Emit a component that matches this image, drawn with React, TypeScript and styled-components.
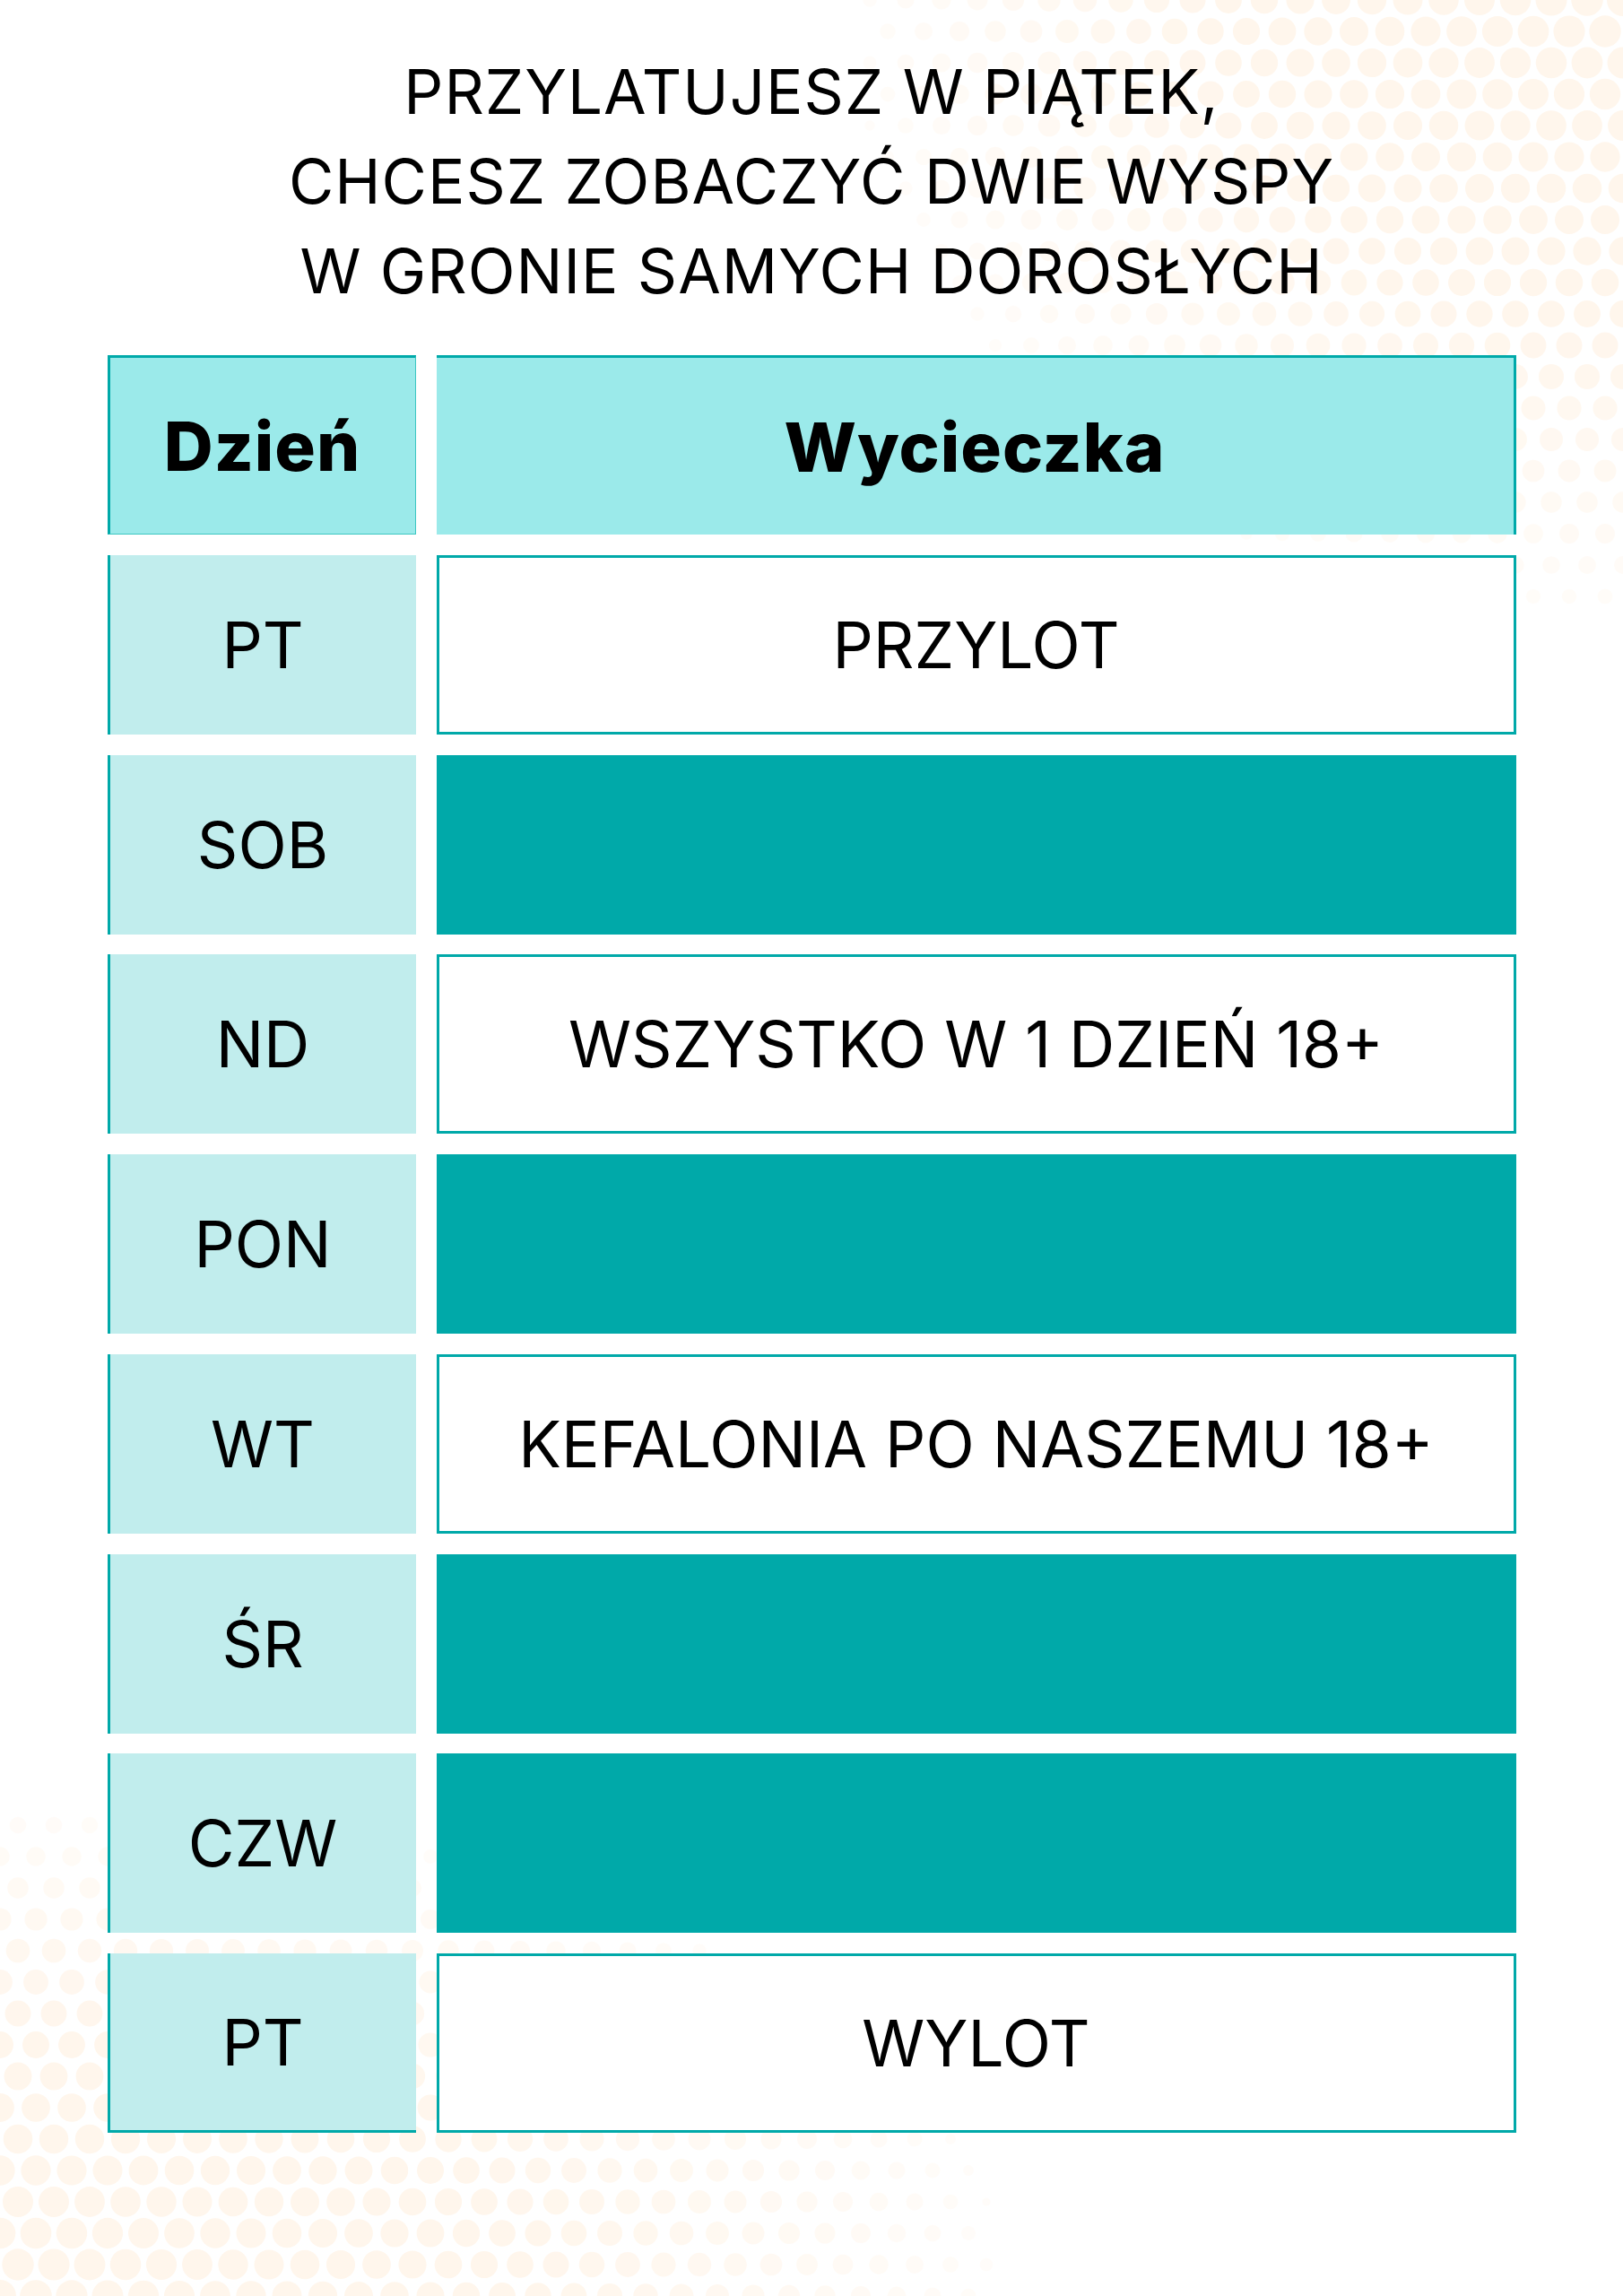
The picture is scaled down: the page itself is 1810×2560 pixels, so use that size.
import React, { FC } from "react"
import styled, { createGlobalStyle, css } from "styled-components"

const TEAL = "#00a9a9"

const GlobalStyle = createGlobalStyle`
  html, body {
    margin: 0;
    padding: 0;
    background: #fff;
  }

  body {
    color: #000;
    font-family: Inter, "Noto Sans", sans-serif;
  }

  * {
    box-sizing: border-box;
  }
`

const Page = styled.div`
  background: #fff;
  height: 2560px;
  overflow: hidden;
  position: relative;
  width: 1810px;
`

const Backdrop = styled.svg`
  inset: 0;
  pointer-events: none;
  position: absolute;
`

const Content = styled.main`
  align-items: center;
  display: flex;
  flex-direction: column;
  padding-top: 52px;
  position: relative;
`

const Title = styled.h1`
  font-size: 69px;
  font-weight: 400;
  letter-spacing: 1px;
  line-height: 100px;
  margin: 0;
  text-align: center;
`

const Table = styled.div`
  column-gap: 23px;
  display: grid;
  grid-auto-rows: 200px;
  grid-template-columns: 344px 1204px;
  margin-top: 44px;
  row-gap: 22.75px;
`

const cellBase = css`
  align-items: center;
  display: flex;
  justify-content: center;
  text-align: center;
`

const HeadCell = styled.div<{ $wide?: boolean }>`
  ${cellBase};
  background: #9beaea;
  border-top: 3px solid ${TEAL};
  font-size: 76px;
  font-weight: 800;
  letter-spacing: 1px;

  ${({ $wide }) =>
    $wide
      ? css`
          border-right: 3px solid ${TEAL};
        `
      : css`
          border-bottom: 1px solid #3cc6c2;
          border-left: 3px solid ${TEAL};
          border-right: 1px solid #3cc6c2;
        `}
`

const DayCell = styled.div<{ $last?: boolean }>`
  ${cellBase};
  background: #c1eded;
  border-left: 3px solid ${TEAL};
  font-size: 71px;
  font-weight: 400;

  ${({ $last }) =>
    $last &&
    css`
      border-bottom: 3px solid ${TEAL};
    `}
`

const TripCell = styled.div<{ $filled?: boolean }>`
  ${cellBase};
  background: ${({ $filled }) => ($filled ? TEAL : "#fff")};
  border: 3px solid ${TEAL};
  font-size: 71px;
  font-weight: 400;
`

type Row = { day: string; trip?: string }

const rows: Row[] = [
  { day: "PT", trip: "PRZYLOT" },
  { day: "SOB" },
  { day: "ND", trip: "WSZYSTKO W 1 DZIEŃ 18+" },
  { day: "PON" },
  { day: "WT", trip: "KEFALONIA PO NASZEMU 18+" },
  { day: "ŚR" },
  { day: "CZW" },
  { day: "PT", trip: "WYLOT" },
]

type Dot = { x: number; y: number; r: number; o: number }

// halftone dots fading out from a corner
const halftone = (cx: number, cy: number, rx: number, ry: number): Dot[] => {
  const dots: Dot[] = []
  const sx = 40
  const sy = 35
  for (let j = 0; j * sy < ry + sy; j++) {
    for (let i = -1; i * sx < rx + sx; i++) {
      const dx = i * sx + (j % 2 ? sx / 2 : 0)
      const dy = j * sy
      const d = Math.sqrt((dx / rx) ** 2 + (dy / ry) ** 2)
      if (d >= 1) continue
      const k = 1 - d
      dots.push({
        x: cx < 900 ? cx + dx : cx - dx,
        y: cy < 1280 ? cy + dy : cy - dy,
        r: 4 + 14 * Math.pow(k, 0.35),
        o: Math.min(1, 0.3 + k * 1.5),
      })
    }
  }
  return dots
}

const dots = [...halftone(1810, 0, 860, 690), ...halftone(0, 2560, 1120, 560)]

const HalftoneBackdrop: FC = () => (
  <Backdrop width="1810" height="2560" viewBox="0 0 1810 2560">
    {dots.map((d, i) => (
      <circle key={i} cx={d.x} cy={d.y} r={d.r} fill="#fff6ec" opacity={d.o} />
    ))}
  </Backdrop>
)

const App: FC = () => (
  <Page>
    <GlobalStyle />
    <HalftoneBackdrop />
    <Content>
      <Title>
        PRZYLATUJESZ W PIĄTEK,
        <br />
        CHCESZ ZOBACZYĆ DWIE WYSPY
        <br />
        W GRONIE SAMYCH DOROSŁYCH
      </Title>

      <Table>
        <HeadCell>Dzień</HeadCell>
        <HeadCell $wide>Wycieczka</HeadCell>
        {rows.map((row, i) => (
          <React.Fragment key={i}>
            <DayCell $last={i === rows.length - 1}>{row.day}</DayCell>
            <TripCell $filled={!row.trip}>{row.trip}</TripCell>
          </React.Fragment>
        ))}
      </Table>
    </Content>
  </Page>
)

export default App
